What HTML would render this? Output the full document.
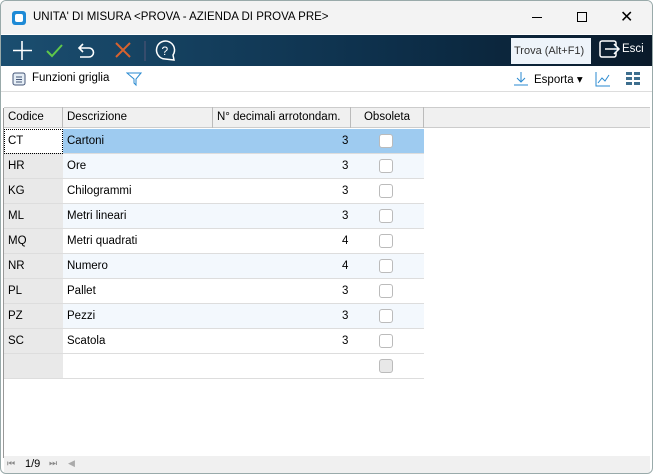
<!DOCTYPE html><html><head><style>
*{margin:0;padding:0;box-sizing:border-box}
body{width:653px;height:474px;background:#fff;font-family:"Liberation Sans",sans-serif;font-size:11.5px;color:#000;position:relative;overflow:hidden}
.win{position:absolute;left:0;top:0;width:653px;height:474px;border:1px solid #9aa;border-radius:6px;overflow:hidden;background:#fff}
.title{position:absolute;left:0;top:0;width:651px;height:33px;background:#f3f3f3}
.title .t{position:absolute;left:32px;top:10px;font-size:11.5px}
.tb{position:absolute;left:0;top:34px;width:651px;height:31px;background:linear-gradient(90deg,#1b4e70,#0d2f4a 60%,#0a1a2a)}
.ab{position:absolute;left:0;top:65px;width:651px;height:26px;background:#fff;border-bottom:1px solid #ddd}
.ab span{position:absolute;top:6px}
.hdr{position:absolute;left:3px;top:106px;width:646px;height:21px;background:#f0f0f0;border-top:1px solid #ccc;border-bottom:1px solid #ccc}
.c{position:absolute;height:25px;line-height:25px;padding-left:4px;border-bottom:1px solid #ddd}
.h{position:absolute;top:106px;height:21px;line-height:20px;padding-left:4px;border-right:1px solid #bbb}
.cb{position:absolute;width:14px;height:14px;border:1px solid #bbb;border-radius:3px;background:#fff}
.foot{position:absolute;left:3px;top:455px;width:646px;height:17px;background:#f0f0f0;font-size:11px}
</style></head><body><div class="win">
<div class="title">
<div style="position:absolute;left:11px;top:10px;width:14px;height:14px;background:#1e8ad6;border-radius:3px"><div style="position:absolute;left:3px;top:3px;width:8px;height:8px;background:#fff;border-radius:2px"></div></div>
<span class="t">UNITA' DI MISURA &lt;PROVA - AZIENDA DI PROVA PRE&gt;</span>
<div style="position:absolute;left:531px;top:16px;width:10px;height:1px;background:#000"></div>
<div style="position:absolute;left:576px;top:11px;width:10px;height:10px;border:1px solid #000"></div>
<span style="position:absolute;left:619px;top:6px;font-size:16px">✕</span>
</div>
<div class="tb">
<svg width="200" height="31" style="position:absolute;left:0;top:0">
<path d="M21 6v19M12 15.5h19" stroke="#fff" stroke-width="1.6"/>
<path d="M46 16l5 5 10-11" stroke="#5fc84a" stroke-width="2" fill="none"/>
<path d="M82 9l-4 4 4 4M78 13h10a4.5 4.5 0 010 9h-9" stroke="#fff" stroke-width="1.6" fill="none"/>
<path d="M115 8l14 14M129 8l-14 14" stroke="#d9622e" stroke-width="2"/>
<path d="M144 6v20" stroke="#557" stroke-width="1"/>
<path d="M164 24a9 9 0 1 1 8-4l1 5z" stroke="#fff" stroke-width="1.5" fill="none"/>
<text x="160.5" y="20" fill="#fff" font-size="12" font-family="Liberation Sans">?</text>
</svg>
<div style="position:absolute;left:510px;top:3px;width:80px;height:26px;background:#eef4fa;color:#333;line-height:26px;padding-left:3px;font-size:11px">Trova (Alt+F1)</div>
<svg width="24" height="24" style="position:absolute;left:598px;top:4px"><rect x="1" y="2" width="16" height="16" rx="2" stroke="#fff" stroke-width="1.5" fill="none"/><path d="M6 10h14M15 5l5 5-5 5" stroke="#fff" stroke-width="1.5" fill="#0d2f4a"/></svg>
<span style="position:absolute;left:621px;top:8px;color:#fff">Esci</span>
</div>
<div class="ab">
<svg width="14" height="14" style="position:absolute;left:11px;top:6px"><rect x="1" y="1" width="12" height="12" rx="2" stroke="#457" fill="#e6eef6"/><path d="M4 5h6M4 7.5h6M4 10h6" stroke="#457"/></svg>
<span style="left:31px">Funzioni griglia</span>
<svg width="16" height="16" style="position:absolute;left:125px;top:5px"><path d="M1 2h14l-5 6v6l-2-2V8z" stroke="#2a8ad0" fill="none"/></svg>
<svg width="16" height="16" style="position:absolute;left:512px;top:5px"><path d="M8 1v10M4 7l4 4 4-4M1 14h14" stroke="#2a8ad0" fill="none"/></svg>
<span style="left:533px">Esporta ▾</span>
<svg width="16" height="16" style="position:absolute;left:594px;top:5px"><path d="M1 1v14h14M3 12l4-5 3 3 4-6" stroke="#2a8ad0" fill="none"/></svg>
<svg width="14" height="14" style="position:absolute;left:625px;top:6px" fill="#3d6e8e"><rect x="0" y="0" width="6" height="3"/><rect x="8" y="0" width="6" height="3"/><rect x="0" y="5" width="6" height="3"/><rect x="8" y="5" width="6" height="3"/><rect x="0" y="10" width="6" height="3"/><rect x="8" y="10" width="6" height="3"/></svg>
</div>
<div class="hdr"></div>
<div class="h" style="left:3px;width:59px">Codice</div>
<div class="h" style="left:62px;width:150px">Descrizione</div>
<div class="h" style="left:212px;width:138px">N° decimali arrotondam.</div>
<div class="h" style="left:350px;width:73px;text-align:center;padding:0">Obsoleta</div>
<div id="rows"></div>
<div style="position:absolute;left:2px;top:107px;width:1px;height:350px;background:#999"></div>
<div class="foot"><span style="position:absolute;left:3px;top:2px;color:#888;font-size:9px">⏮</span><span style="position:absolute;left:21px;top:2px">1/9</span><span style="position:absolute;left:45px;top:2px;color:#888;font-size:9px">⏭</span><span style="position:absolute;left:64px;top:2px;color:#aaa;font-size:9px">◀</span></div>
</div>
<script>
var d=[["CT","Cartoni",3],["HR","Ore",3],["KG","Chilogrammi",3],["ML","Metri lineari",3],["MQ","Metri quadrati",4],["NR","Numero",4],["PL","Pallet",3],["PZ","Pezzi",3],["SC","Scatola",3],["","",""]];
var h="";d.forEach(function(r,i){var y=128+i*25;var bg=i==0?"#9ecbf0":(i%2?"#f3f8fd":"#fff");if(i==9)bg="#fff";
h+='<div class="c" style="left:3px;top:'+y+'px;width:59px;background:'+(i==0?"#fff;outline:1px dotted #000;outline-offset:-1px":"#e9e9e9")+'">'+r[0]+'</div>';
h+='<div class="c" style="left:62px;top:'+y+'px;width:361px;background:'+bg+'">'+r[1]+'<span style="position:absolute;left:279px">'+r[2]+'</span></div>';
h+='<div class="cb" style="left:378px;top:'+(y+5)+'px;'+(i==9?"background:#e8e8e8":"")+'"></div>';});
document.getElementById("rows").innerHTML=h;
</script>
</body></html>
